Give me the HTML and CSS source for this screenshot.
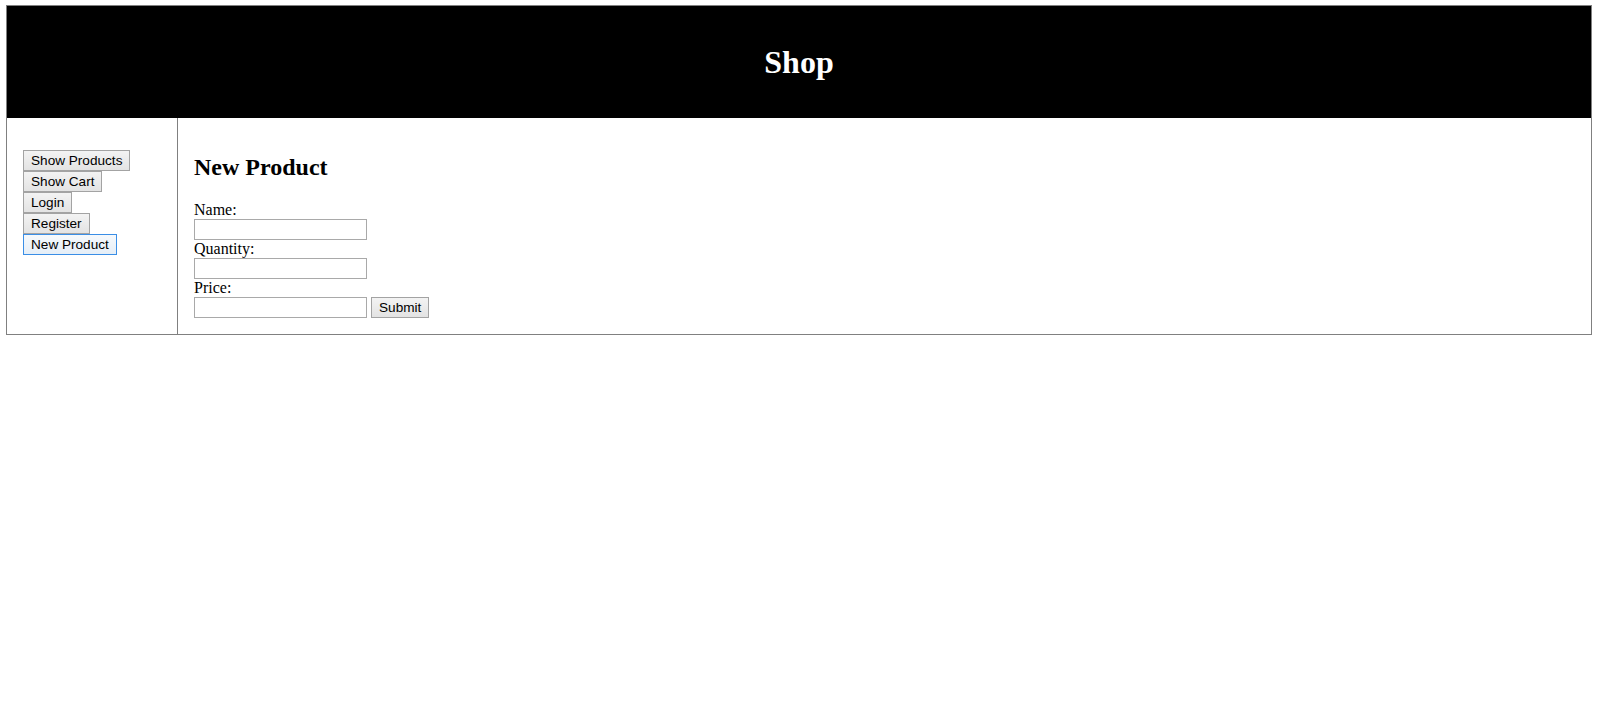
FILE: index.html
```html
<!DOCTYPE html>
<html>
<head>
<meta charset="utf-8">
<title>Shop</title>
<link rel="stylesheet" href="styles.css">
</head>
<body>
<table class="layout">
  <tr>
    <td class="header" colspan="2"><h1 class="title">Shop</h1></td>
  </tr>
  <tr>
    <td class="sidebar">
      <div class="nav">
        <button class="btn">Show Products</button>
        <button class="btn">Show Cart</button>
        <button class="btn">Login</button>
        <button class="btn">Register</button>
        <button class="btn btn-focus">New Product</button>
      </div>
    </td>
    <td class="content">
      <h2 class="heading">New Product</h2>
      <form class="form">
        <div class="label">Name:</div>
        <div class="row"><input class="field" type="text"></div>
        <div class="label">Quantity:</div>
        <div class="row"><input class="field" type="text"></div>
        <div class="label">Price:</div>
        <div class="row"><input class="field" type="text"><button class="btn btn-submit" type="button">Submit</button></div>
      </form>
    </td>
  </tr>
</table>
</body>
</html>
```
FILE: styles.css
```css
html, body {
  margin: 0;
  padding: 0;
  background: #fff;
}
body {
  font-family: "Liberation Serif", "Times New Roman", serif;
  font-size: 16px;
  color: #000;
}
.layout {
  margin: 5px 6px;
  width: calc(100% - 12px);
  border-collapse: collapse;
  border: 1px solid #808080;
}
.layout td {
  padding: 0;
  vertical-align: top;
}
.header {
  background: #000;
  text-align: center;
  padding: 16px 0 !important;
  height: 80px;
  vertical-align: middle !important;
}
.title {
  margin: 0;
  color: #fff;
  font-size: 32px;
  font-weight: bold;
  line-height: 37px;
}
.sidebar {
  width: 138px;
  padding: 32px 16px 16px 16px !important;
  border-right: 1px solid #808080;
}
.nav {
  display: flex;
  flex-direction: column;
  align-items: flex-start;
}
.btn {
  font-family: "Liberation Sans", Arial, sans-serif;
  font-size: 13.6px;
  height: 21px;
  line-height: 15px;
  padding: 1px 7px;
  margin: 0;
  color: #000;
  background: linear-gradient(#f3f3f3, #e3e3e3);
  border: 1px solid #a3a3a3;
  border-radius: 0;
  box-sizing: border-box;
  white-space: nowrap;
}
.btn-focus {
  border-color: #3a8ee6;
  background: linear-gradient(#f6f9fc, #e5eef7);
}
.btn-submit {
  margin-left: 4px;
  padding: 1px 7px;
}
.content {
  padding: 16px !important;
}
.heading {
  margin: 19px 0 20px 0;
  font-size: 24px;
  font-weight: bold;
  line-height: 28px;
}
.form {
  margin: 0;
}
.label {
  line-height: 18px;
  height: 18px;
}
.row {
  display: flex;
  align-items: flex-start;
  height: 21px;
}
.field {
  width: 173px;
  height: 21px;
  box-sizing: border-box;
  margin: 0;
  padding: 1px 2px;
  border: 1px solid #a9a9a9;
  font-family: "Liberation Sans", Arial, sans-serif;
  font-size: 13.33px;
  background: #fff;
}
```
